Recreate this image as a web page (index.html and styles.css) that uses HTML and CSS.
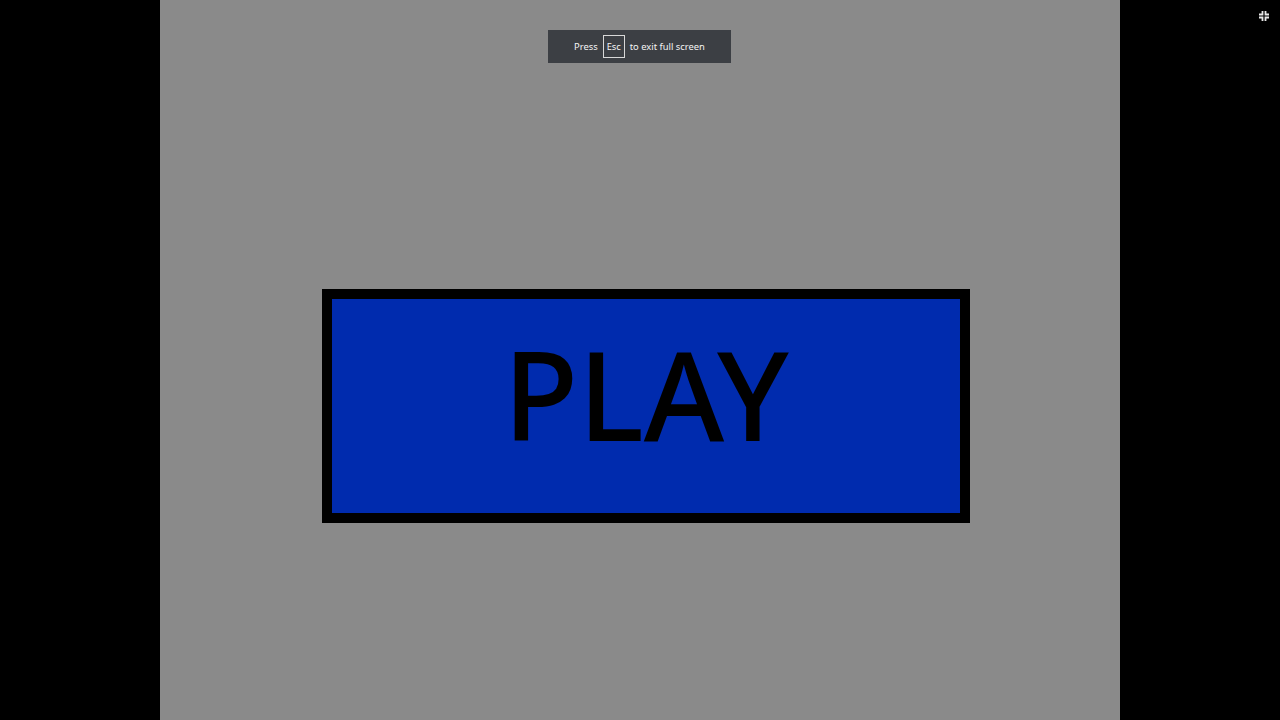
FILE: index.html
```html
<!DOCTYPE html>
<html lang="en">
<head>
<meta charset="utf-8">
<title>Play</title>
<link rel="stylesheet" href="styles.css">
</head>
<body>
<main class="stage">
  <button class="play" type="button">PLAY</button>
</main>
<div class="toast">
  <span>Press</span>
  <kbd class="key">Esc</kbd>
  <span>to exit full screen</span>
</div>
<svg class="exit-icon" viewBox="0 0 12 12" width="12" height="12" aria-hidden="true">
  <path d="M4.5 1v3.5H1M7.5 1v3.5H11M4.5 11V7.5H1M7.5 11V7.5H11" fill="none" stroke="#e8e8e8" stroke-width="1.8"/>
</svg>
</body>
</html>
```

FILE: styles.css
```css
* { box-sizing: border-box; }
html, body { height: 100%; }
body {
  margin: 0;
  background: #000;
  overflow: hidden;
  font-family: "Noto Sans", "Open Sans", sans-serif;
  display: flex;
  justify-content: center;
}
.stage {
  width: 960px;
  height: 720px;
  background: #8a8a8a;
  padding: 289px 0 0 162px;
}
.play {
  display: flex;
  align-items: center;
  justify-content: center;
  width: 648px;
  height: 234px;
  padding: 0 0 26px;
  border: 10px solid #000;
  border-radius: 0;
  background: #002bae;
  color: #000;
  font-family: inherit;
  font-size: 123px;
  font-weight: 500;
  line-height: 1;
}
.toast {
  position: absolute;
  top: 30px;
  left: 548px;
  width: 183px;
  height: 33px;
  display: flex;
  align-items: center;
  justify-content: center;
  gap: 5px;
  padding-bottom: 1px;
  background: #3c3f44;
  color: #f4f4f4;
  font-size: 9.4px;
}
.key {
  display: flex;
  align-items: center;
  justify-content: center;
  width: 22px;
  height: 23px;
  border: 1px solid #d8d8d8;
  font-family: inherit;
  font-size: 9.4px;
}
.exit-icon {
  position: absolute;
  top: 10px;
  left: 1258px;
}
```
